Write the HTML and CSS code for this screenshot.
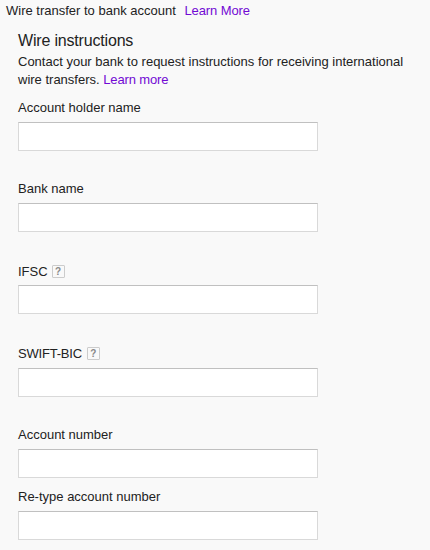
FILE: index.html
```html
<!DOCTYPE html>
<html lang="en">
<head>
    <meta charset="UTF-8">
    <meta name="viewport" content="width=device-width, initial-scale=1.0">
    <link rel="stylesheet" href="styles.css">
    <title>Wire transfer to bank account</title>
</head>
<body>
    <p class="payment-method">Wire transfer to bank account <a href="#" class="learn-more">Learn More</a></p>
    <form class="wire-form">
        <h1>Wire instructions</h1>
        <p class="description">Contact your bank to request instructions for receiving international<br>wire transfers. <a href="#">Learn more</a></p>
        <div class="field holder">
            <label for="holder">Account holder name</label>
            <input type="text" id="holder">
        </div>
        <div class="field bank">
            <label for="bank">Bank name</label>
            <input type="text" id="bank">
        </div>
        <div class="field ifsc">
            <label for="ifsc">IFSC <span class="help">?</span></label>
            <input type="text" id="ifsc">
        </div>
        <div class="field swift">
            <label for="swift"><span class="code">SWIFT-BIC</span> <span class="help">?</span></label>
            <input type="text" id="swift">
        </div>
        <div class="field account">
            <label for="account">Account number</label>
            <input type="text" id="account">
        </div>
        <div class="field retype">
            <label for="retype">Re-type account number</label>
            <input type="text" id="retype">
        </div>
    </form>
</body>
</html>
```
FILE: styles.css
```css
* {
    box-sizing: border-box;
}

body {
    margin: 0;
    height: 550px;
    overflow: hidden;
    background-color: #f9f9f9;
    color: #222;
    font-family: "Liberation Sans", Arial, sans-serif;
    font-size: 13px;
    line-height: 18px;
}

a {
    color: #7209d4;
    letter-spacing: -0.15px;
    text-decoration: none;
}

p {
    margin: 0;
}

.payment-method {
    padding: 2px 6px 0;
}

.learn-more {
    margin-left: 5px;
    letter-spacing: -0.1px;
}

.wire-form {
    padding: 11px 18px 0;
}

h1 {
    margin: 0 0 2px;
    font-size: 16px;
    font-weight: normal;
    letter-spacing: -0.18px;
    line-height: 20px;
}

.description {
    white-space: nowrap;
}

.field {
    display: flex;
    flex-direction: column;
}

.field label {
    display: flex;
    align-items: center;
    height: 18px;
    margin-bottom: 5px;
}

.field input {
    width: 300px;
    height: 29px;
    padding: 1px 8px;
    border: 1px solid #d9d9d9;
    border-top-color: #c0c0c0;
    border-radius: 0;
    background-color: #fff;
    font: inherit;
}

.holder {
    margin-top: 10px;
}

.bank,
.account {
    margin-top: 29px;
}

.ifsc,
.swift {
    margin-top: 31px;
}

.ifsc label {
    margin-bottom: 4px;
}

.retype {
    margin-top: 10px;
}

.code {
    letter-spacing: -0.2px;
}

.help {
    width: 13px;
    height: 13px;
    margin: 0 0 1px 4px;
    border: 1px solid #ccc;
    border-radius: 1px;
    color: #888;
    font-size: 10px;
    font-weight: bold;
    line-height: 11px;
    text-align: center;
}

.swift .help {
    margin-left: 5px;
}
```
